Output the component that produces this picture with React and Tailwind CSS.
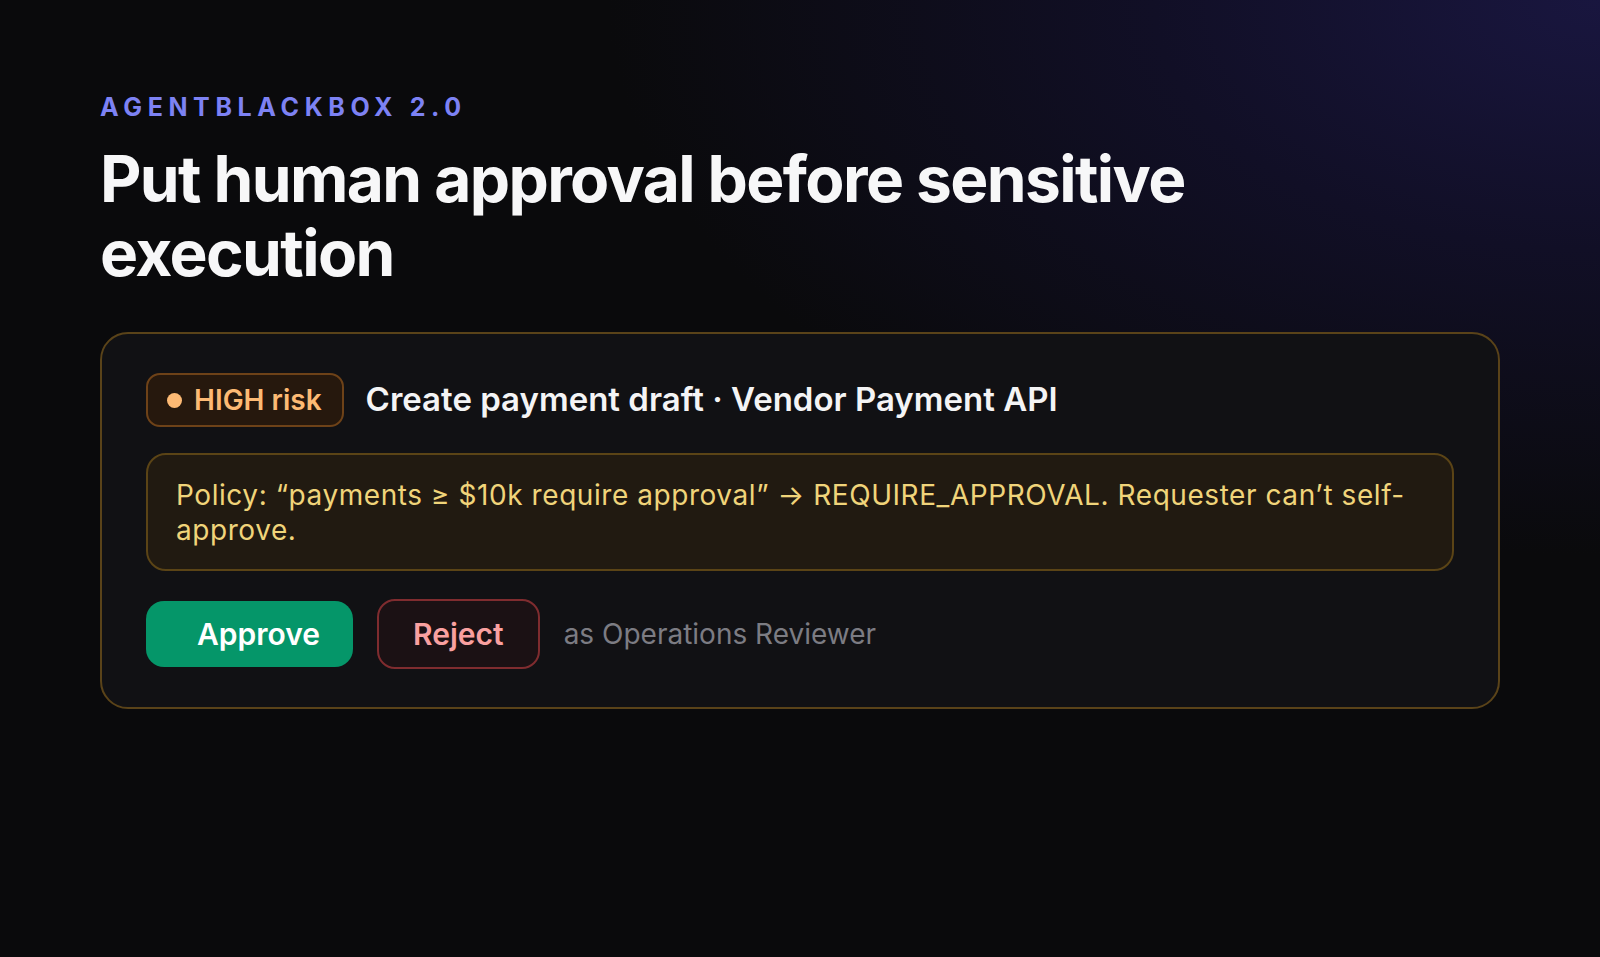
import React from 'react';

const sans = 'font-["Inter","Noto_Sans",sans-serif]';

function RiskBadge() {
  return (
    <span className="flex h-[54px] shrink-0 items-center gap-3 rounded-[14px] border-2 border-[#6e4218] bg-[#26180d] pl-[19px] pr-[20px]">
      <span className="h-[15px] w-[15px] rounded-full bg-[#fdba74]" />
      <span className="text-[28px] font-semibold leading-none text-[#fdba74]">HIGH risk</span>
    </span>
  );
}

export default function App() {
  return (
    <div
      className={`${sans} min-h-screen bg-[#0a0a0c] bg-[radial-gradient(ellipse_62%_58%_at_100%_0%,#19163f_0%,#110f26_45%,#0a0a0c_100%)] px-[100px] pt-[91px] pb-24`}
    >
      {/* Eyebrow + headline */}
      <p className="text-[25px] font-bold uppercase leading-8 tracking-[0.225em] text-[#7d82f4]">
        AgentBlackbox 2.0
      </p>
      <h1 className="mt-[19px] max-w-6xl text-[64px] font-bold leading-[1.15] tracking-[-0.025em] text-[#f7f7f8]">
        Put human approval before sensitive execution
      </h1>

      {/* Approval card */}
      <div className="mt-[43px] flex flex-col gap-[26px] rounded-[28px] border-2 border-[#5a4319] bg-[#111114] px-[44px] pt-[39px] pb-[38px]">
        <div className="flex items-center gap-[22px]">
          <RiskBadge />
          <h2 className="text-[33px] font-semibold text-[#f4f4f5]">
            Create payment draft · Vendor Payment API
          </h2>
        </div>

        <div className="rounded-[20px] border-2 border-[#5b4416] bg-[#211a11] px-[28px] pt-[23px] pb-[21px] text-[28px] leading-[35px] tracking-[0.02em] text-[#f0d47a]">
          Policy: “payments ≥ $10k require approval” → REQUIRE_APPROVAL. Requester can’t self-approve.
        </div>

        <div className="mt-[2px] flex items-center gap-6">
          <button className="h-[66px] rounded-[18px] bg-[#059669] pl-[51px] pr-[33px] text-[30px] font-semibold text-white">
            Approve
          </button>
          <button className="h-[70px] rounded-[18px] border-2 border-[#7f2c2f] bg-[#1b1114] px-[34px] text-[30px] font-semibold text-[#f9a0a0]">
            Reject
          </button>
          <span className="text-[28px] text-[#7c7c83]">as Operations Reviewer</span>
        </div>
      </div>
    </div>
  );
}
